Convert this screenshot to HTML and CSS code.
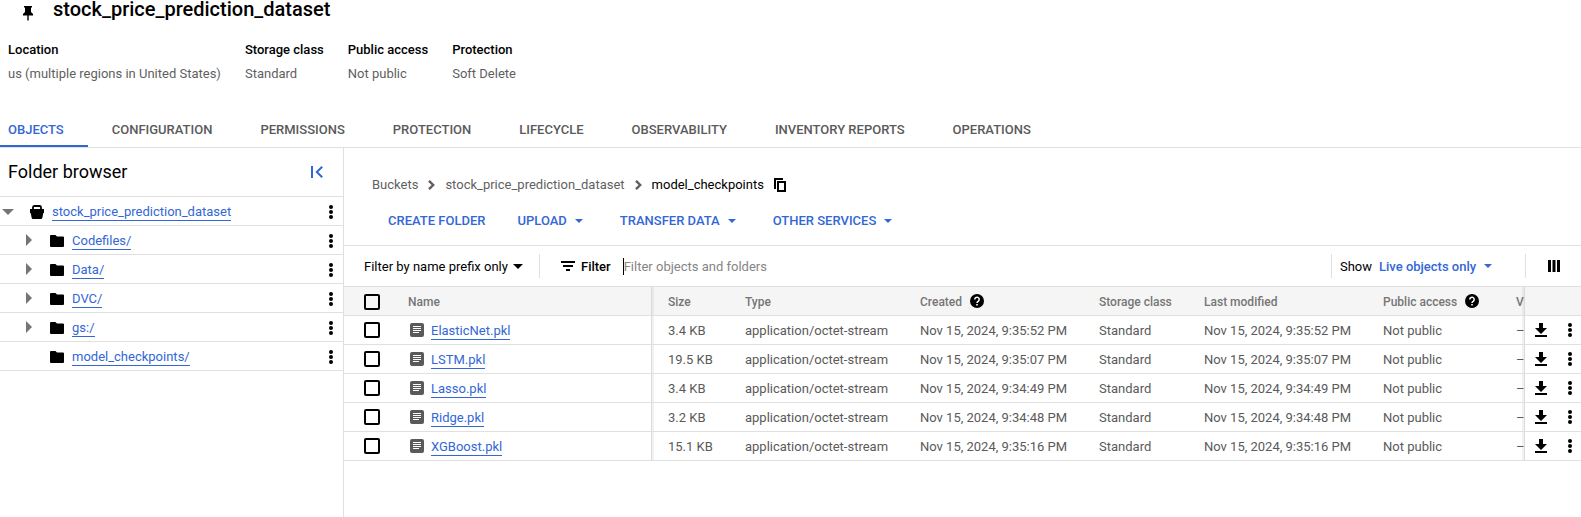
FILE: index.html
```html
<!DOCTYPE html>
<html lang="en">
<head>
<meta charset="utf-8">
<title>stock_price_prediction_dataset</title>
<link rel="stylesheet" href="styles.css">
</head>
<body>
<svg class="sprite" aria-hidden="true">
  <symbol id="dots" viewBox="0 0 4 14"><circle cx="2" cy="2" r="2"/><circle cx="2" cy="7" r="2"/><circle cx="2" cy="12" r="2"/></symbol>
  <symbol id="folder" viewBox="0 0 14 12"><path d="M1 0h4.500l1.500 1.500h6a1 1 0 0 1 1 1V11a1 1 0 0 1-1 1H1a1 1 0 0 1-1-1V1a1 1 0 0 1 1-1z"/></symbol>
  <symbol id="right" viewBox="0 0 6 12"><path d="M0 0l6 6-6 6z"/></symbol>
  <symbol id="down" viewBox="0 0 8 4"><path d="M0 0h8L4 4z"/></symbol>
  <symbol id="chevron" viewBox="0 0 7 10"><path d="M1 .8L5.200 5 1 9.200" fill="none" stroke="currentColor" stroke-width="2.400"/></symbol>
  <symbol id="file" viewBox="0 0 14 14"><rect width="14" height="14" rx="2"/><path d="M3 3.500h8M3 5.500h8M3 7.500h8M3 9.500h6" stroke="#fff" stroke-width="1"/></symbol>
  <symbol id="download" viewBox="0 0 12 14"><path d="M4 0h4v5h4l-6 6-6-6h4zM0 12h12v2H0z"/></symbol>
  <symbol id="help" viewBox="0 0 14 14"><circle cx="7" cy="7" r="7"/><path d="M4.800 5.500a2.200 2.200 0 1 1 3.600 1.600C7.600 7.700 7 8 7 9" fill="none" stroke="#fff" stroke-width="1.500"/><path d="M6.200 10h1.600v1.600H6.200z" fill="#fff"/></symbol>
</svg>

<header class="header">
  <div class="title-row">
    <svg class="pin" viewBox="0 0 10 15"><path d="M1 0h8v1.500H8V6l2 2v1.500H5.700V14L5 15l-.7-1V9.500H0V8l2-2V1.500H1z"/></svg>
    <h1 class="title">stock_price_prediction_dataset</h1>
  </div>
  <dl class="facts">
    <div><dt>Location</dt><dd>us (multiple regions in United States)</dd></div>
    <div><dt>Storage class</dt><dd>Standard</dd></div>
    <div><dt>Public access</dt><dd>Not public</dd></div>
    <div><dt>Protection</dt><dd>Soft Delete</dd></div>
  </dl>
</header>

<nav class="tabs">
  <a class="tab active" href="#objects">OBJECTS</a>
  <a class="tab" href="#configuration">CONFIGURATION</a>
  <a class="tab" href="#permissions">PERMISSIONS</a>
  <a class="tab" href="#protection">PROTECTION</a>
  <a class="tab" href="#lifecycle">LIFECYCLE</a>
  <a class="tab" href="#observability">OBSERVABILITY</a>
  <a class="tab" href="#inventory">INVENTORY REPORTS</a>
  <a class="tab" href="#operations">OPERATIONS</a>
</nav>

<div class="layout">
  <aside class="sidebar">
    <div class="side-head">
      <h2 class="side-title">Folder browser</h2>
      <button class="icon-btn blue" aria-label="Collapse"><svg width="12" height="12" viewBox="0 0 12 12"><path d="M1 0v12M11.200.7L5.800 6l5.400 5.300" fill="none" stroke="currentColor" stroke-width="2"/></svg></button>
    </div>
    <ul class="tree">
      <li class="node root">
        <button class="toggle" aria-label="Collapse"><svg width="12" height="6"><use href="#down"/></svg></button>
        <svg class="bucket" viewBox="0 0 14 14"><path d="M3 5V2.500Q3 1 4.500 1h5Q11 1 11 2.500V5" fill="none" stroke="#000" stroke-width="1.800"/><path d="M0 4h14v4h-.7L12.300 13q-.3 1-1.200 1H2.900Q2 14 1.700 13L.7 8H0z"/></svg>
        <a class="link" href="#root">stock_price_prediction_dataset</a>
        <button class="icon-btn more" aria-label="More"><svg width="4" height="14"><use href="#dots"/></svg></button>
      </li>
      <li class="node"><button class="toggle" aria-label="Expand"><svg width="6" height="12"><use href="#right"/></svg></button><svg class="folder"><use href="#folder"/></svg><a class="link" href="#codefiles">Codefiles/</a><button class="icon-btn more" aria-label="More"><svg width="4" height="14"><use href="#dots"/></svg></button></li>
      <li class="node"><button class="toggle" aria-label="Expand"><svg width="6" height="12"><use href="#right"/></svg></button><svg class="folder"><use href="#folder"/></svg><a class="link" href="#data">Data/</a><button class="icon-btn more" aria-label="More"><svg width="4" height="14"><use href="#dots"/></svg></button></li>
      <li class="node"><button class="toggle" aria-label="Expand"><svg width="6" height="12"><use href="#right"/></svg></button><svg class="folder"><use href="#folder"/></svg><a class="link" href="#dvc">DVC/</a><button class="icon-btn more" aria-label="More"><svg width="4" height="14"><use href="#dots"/></svg></button></li>
      <li class="node"><button class="toggle" aria-label="Expand"><svg width="6" height="12"><use href="#right"/></svg></button><svg class="folder"><use href="#folder"/></svg><a class="link" href="#gs">gs:/</a><button class="icon-btn more" aria-label="More"><svg width="4" height="14"><use href="#dots"/></svg></button></li>
      <li class="node"><span class="toggle"></span><svg class="folder"><use href="#folder"/></svg><a class="link" href="#model">model_checkpoints/</a><button class="icon-btn more" aria-label="More"><svg width="4" height="14"><use href="#dots"/></svg></button></li>
    </ul>
  </aside>

  <main class="main">
    <nav class="crumbs">
      <a href="#buckets">Buckets</a>
      <svg class="chevron"><use href="#chevron"/></svg>
      <a href="#root">stock_price_prediction_dataset</a>
      <svg class="chevron"><use href="#chevron"/></svg>
      <span class="current">model_checkpoints</span>
      <button class="icon-btn" aria-label="Copy"><svg width="12" height="14" viewBox="0 0 12 14"><path d="M1 11V1h8" fill="none" stroke="#000" stroke-width="2"/><path d="M4 4h7v9H4z" fill="none" stroke="#000" stroke-width="2"/></svg></button>
    </nav>
    <div class="actions">
      <button class="action">CREATE FOLDER</button>
      <button class="action menu">UPLOAD <svg class="caret"><use href="#down"/></svg></button>
      <button class="action menu">TRANSFER DATA <svg class="caret"><use href="#down"/></svg></button>
      <button class="action menu">OTHER SERVICES <svg class="caret"><use href="#down"/></svg></button>
    </div>
    <div class="filter-bar">
      <div class="pick">
        <select class="select" aria-label="Filter mode"><option>Filter by name prefix only</option></select>
        <svg width="10" height="5"><use href="#down"/></svg>
      </div>
      <label class="filter-label" for="filter"><svg width="14" height="10" viewBox="0 0 14 10"><path d="M0 0h14v2H0zM2 4h10v2H2zM5 8h4v2H5z"/></svg><span class="bar-text">Filter</span></label>
      <input class="filter-input" id="filter" type="text" placeholder="Filter objects and folders">
      <div class="show">
        <label class="bar-text" for="show">Show</label>
        <select class="select strong" id="show"><option>Live objects only</option></select>
        <svg class="caret"><use href="#down"/></svg>
      </div>
      <div class="columns"><button class="icon-btn" aria-label="Columns"><svg width="12" height="12" viewBox="0 0 12 12"><path d="M0 0h3v12H0zM4.500 0h3v12h-3zM9 0h3v12H9z"/></svg></button></div>
    </div>
    <table class="grid">
      <colgroup><col class="c-check"><col><col class="c-size"><col class="c-type"><col class="c-date"><col class="c-class"><col class="c-date"><col class="c-public"><col class="c-version"><col class="c-tools"></colgroup>
      <thead>
        <tr><th><input class="check" type="checkbox" aria-label="Select all"></th><th class="name">Name</th><th class="edge">Size</th><th>Type</th><th><span class="tip">Created<svg class="help"><use href="#help"/></svg></span></th><th>Storage class</th><th>Last modified</th><th><span class="tip">Public access<svg class="help"><use href="#help"/></svg></span></th><th class="edge-end">V</th><th class="tools"></th></tr>
      </thead>
      <tbody>
        <tr><td><input class="check" type="checkbox" aria-label="Select ElasticNet.pkl"></td><td class="name"><div class="file"><svg><use href="#file"/></svg><a class="link" href="#f1">ElasticNet.pkl</a></div></td><td class="edge">3.4 KB</td><td>application/octet-stream</td><td>Nov 15, 2024, 9:35:52 PM</td><td>Standard</td><td>Nov 15, 2024, 9:35:52 PM</td><td>Not public</td><td class="edge-end">–</td><td class="tools"><div class="tool-row"><button class="icon-btn" aria-label="Download"><svg width="12" height="14"><use href="#download"/></svg></button><button class="icon-btn" aria-label="More"><svg width="4" height="14"><use href="#dots"/></svg></button></div></td></tr>
        <tr><td><input class="check" type="checkbox" aria-label="Select LSTM.pkl"></td><td class="name"><div class="file"><svg><use href="#file"/></svg><a class="link" href="#f2">LSTM.pkl</a></div></td><td class="edge">19.5 KB</td><td>application/octet-stream</td><td>Nov 15, 2024, 9:35:07 PM</td><td>Standard</td><td>Nov 15, 2024, 9:35:07 PM</td><td>Not public</td><td class="edge-end">–</td><td class="tools"><div class="tool-row"><button class="icon-btn" aria-label="Download"><svg width="12" height="14"><use href="#download"/></svg></button><button class="icon-btn" aria-label="More"><svg width="4" height="14"><use href="#dots"/></svg></button></div></td></tr>
        <tr><td><input class="check" type="checkbox" aria-label="Select Lasso.pkl"></td><td class="name"><div class="file"><svg><use href="#file"/></svg><a class="link" href="#f3">Lasso.pkl</a></div></td><td class="edge">3.4 KB</td><td>application/octet-stream</td><td>Nov 15, 2024, 9:34:49 PM</td><td>Standard</td><td>Nov 15, 2024, 9:34:49 PM</td><td>Not public</td><td class="edge-end">–</td><td class="tools"><div class="tool-row"><button class="icon-btn" aria-label="Download"><svg width="12" height="14"><use href="#download"/></svg></button><button class="icon-btn" aria-label="More"><svg width="4" height="14"><use href="#dots"/></svg></button></div></td></tr>
        <tr><td><input class="check" type="checkbox" aria-label="Select Ridge.pkl"></td><td class="name"><div class="file"><svg><use href="#file"/></svg><a class="link" href="#f4">Ridge.pkl</a></div></td><td class="edge">3.2 KB</td><td>application/octet-stream</td><td>Nov 15, 2024, 9:34:48 PM</td><td>Standard</td><td>Nov 15, 2024, 9:34:48 PM</td><td>Not public</td><td class="edge-end">–</td><td class="tools"><div class="tool-row"><button class="icon-btn" aria-label="Download"><svg width="12" height="14"><use href="#download"/></svg></button><button class="icon-btn" aria-label="More"><svg width="4" height="14"><use href="#dots"/></svg></button></div></td></tr>
        <tr><td><input class="check" type="checkbox" aria-label="Select XGBoost.pkl"></td><td class="name"><div class="file"><svg><use href="#file"/></svg><a class="link" href="#f5">XGBoost.pkl</a></div></td><td class="edge">15.1 KB</td><td>application/octet-stream</td><td>Nov 15, 2024, 9:35:16 PM</td><td>Standard</td><td>Nov 15, 2024, 9:35:16 PM</td><td>Not public</td><td class="edge-end">–</td><td class="tools"><div class="tool-row"><button class="icon-btn" aria-label="Download"><svg width="12" height="14"><use href="#download"/></svg></button><button class="icon-btn" aria-label="More"><svg width="4" height="14"><use href="#dots"/></svg></button></div></td></tr>
      </tbody>
    </table>
  </main>
</div>
</body>
</html>
```
FILE: styles.css
```css
* { box-sizing: border-box; }
html { height: 100%; }
body {
  margin: 0;
  min-height: 100%;
  display: flex;
  flex-direction: column;
  font: 13px/16px Roboto, "Liberation Sans", sans-serif;
  color: #000;
  background: #fff;
}
.sprite { position: absolute; width: 0; height: 0; }
svg { flex: none; }
a { color: inherit; text-decoration: none; }
button, input, select { font: inherit; color: inherit; margin: 0; padding: 0; border: 0; background: none; }
button { cursor: pointer; }

.header { padding: 0 8px; }
.title-row { display: flex; align-items: center; gap: 20px; padding-left: 15px; height: 18px; }
.pin { width: 10px; height: 15px; margin-top: 8px; }
.title { margin: 0; font-size: 20px; line-height: 20px; font-weight: 500; }
.facts { display: flex; gap: 24px; margin: 24px 0 0; }
.facts dt { font-weight: 500; }
.facts dd { margin: 8px 0 0; color: #5f5f5f; }

.tabs { display: flex; margin-top: 29px; border-bottom: 1px solid #e0e0e0; }
.tab { padding: 11px 24px 7px; border-bottom: 2px solid transparent; font-weight: 500; color: #5a5a5a; }
.tab:first-child { padding-left: 8px; }
.tab.active { color: #3367d6; border-bottom-color: #3367d6; }

.layout { display: flex; flex: 1; }
.sidebar { flex: none; width: 344px; border-right: 1px solid #e0e0e0; }
.side-head { display: flex; align-items: center; justify-content: space-between; height: 49px; padding: 0 20px 0 8px; border-bottom: 1px solid #e0e0e0; }
.side-title { margin: 0; font-size: 18px; line-height: 24px; font-weight: 400; }
.icon-btn { display: flex; }
.blue { color: #3367d6; }
.tree { list-style: none; margin: 0; padding: 0; }
.node { display: flex; align-items: center; height: 29px; padding: 1px 10px 0 26px; border-bottom: 1px solid #e0e0e0; }
.node.root { padding-left: 2px; }
.toggle { display: flex; width: 24px; flex: none; padding-bottom: 2px; fill: #757575; }
.root .toggle { width: 28px; padding-bottom: 0; }
.bucket { width: 14px; height: 14px; margin-right: 8px; }
.folder { width: 14px; height: 12px; margin-right: 8px; }
.more { margin-left: auto; }
.link { padding-top: 2px; color: #3367d6; border-bottom: 1px solid #3367d6; }

.main { flex: 1; min-width: 0; }
.crumbs { display: flex; align-items: center; gap: 10px; padding: 29px 28px 0; color: #5f5f5f; }
.chevron { width: 7px; height: 10px; }
.current { color: #000; }
.actions { display: flex; gap: 32px; padding: 20px 44px 16px; border-bottom: 1px solid #e0e0e0; }
.action { display: flex; align-items: center; gap: 8px; font-weight: 500; color: #3367d6; fill: #3367d6; }
.menu { padding-right: 5px; }
.caret { width: 8px; height: 4px; fill: #3367d6; }

.filter-bar { display: flex; align-items: center; height: 40px; padding-left: 20px; }
.pick { display: flex; align-items: center; gap: 5px; height: 24px; padding-right: 16px; border-right: 1px solid #e0e0e0; }
.select { appearance: none; padding-top: 2px; }
.bar-text { padding-top: 2px; }
.select.strong { color: #3367d6; font-weight: 500; }
.filter-label { display: flex; align-items: center; gap: 6px; padding: 0 12px 0 21px; font-weight: 500; }
.filter-input { flex: 1; min-width: 0; height: 17px; border-left: 1px solid #000; outline: 0; }
.filter-input::placeholder { color: #858585; opacity: 1; }
.show { display: flex; align-items: center; gap: 7px; height: 24px; padding: 0 33px 0 8px; border-left: 1px solid #e0e0e0; }
.columns { display: flex; align-items: center; height: 24px; padding: 0 21px 0 22px; border-left: 1px solid #e0e0e0; }

.grid { width: 100%; table-layout: fixed; border-collapse: separate; border-spacing: 0; border-top: 1px solid #e0e0e0; color: #5a5a5a; }
.grid th, .grid td { height: 29px; padding: 2px 0 0 16px; border-bottom: 1px solid #e0e0e0; text-align: left; white-space: nowrap; overflow: hidden; vertical-align: middle; }
.grid th { font-size: 12px; font-weight: 500; color: #757575; background-color: #f5f5f5; }
.grid th:first-child, .grid td:first-child { padding-left: 20px; }
.grid td:first-child, .grid td.name, .grid td.tools { padding-top: 0; }
.c-check { width: 48px; }
.c-size { width: 77px; }
.c-type { width: 175px; }
.c-date { width: 179px; }
.c-class { width: 105px; }
.c-public { width: 133px; }
.c-version { width: 24px; }
.c-tools { width: 57px; }
.grid .name { border-right: 1px solid #dadada; }
.grid .edge { background-image: linear-gradient(to right, #0000000d 2px, transparent 2px); }
.grid .edge-end { background-image: linear-gradient(to left, #0000000d 2px, transparent 2px); }
.grid .tools { padding-left: 10px; border-left: 1px solid #dadada; }
.tool-row { display: flex; justify-content: space-between; padding-right: 9px; }
.file { display: flex; align-items: center; gap: 7px; padding-left: 2px; }
.file svg { width: 14px; height: 14px; fill: #5a5a5a; }
.tip { display: flex; align-items: center; gap: 8px; }
.help { width: 14px; height: 14px; margin-bottom: 2px; fill: #000; }
.check { appearance: none; display: block; width: 16px; height: 16px; border: 2px solid #000; border-radius: 2px; }
.check:checked { background: #3367d6; }
```
